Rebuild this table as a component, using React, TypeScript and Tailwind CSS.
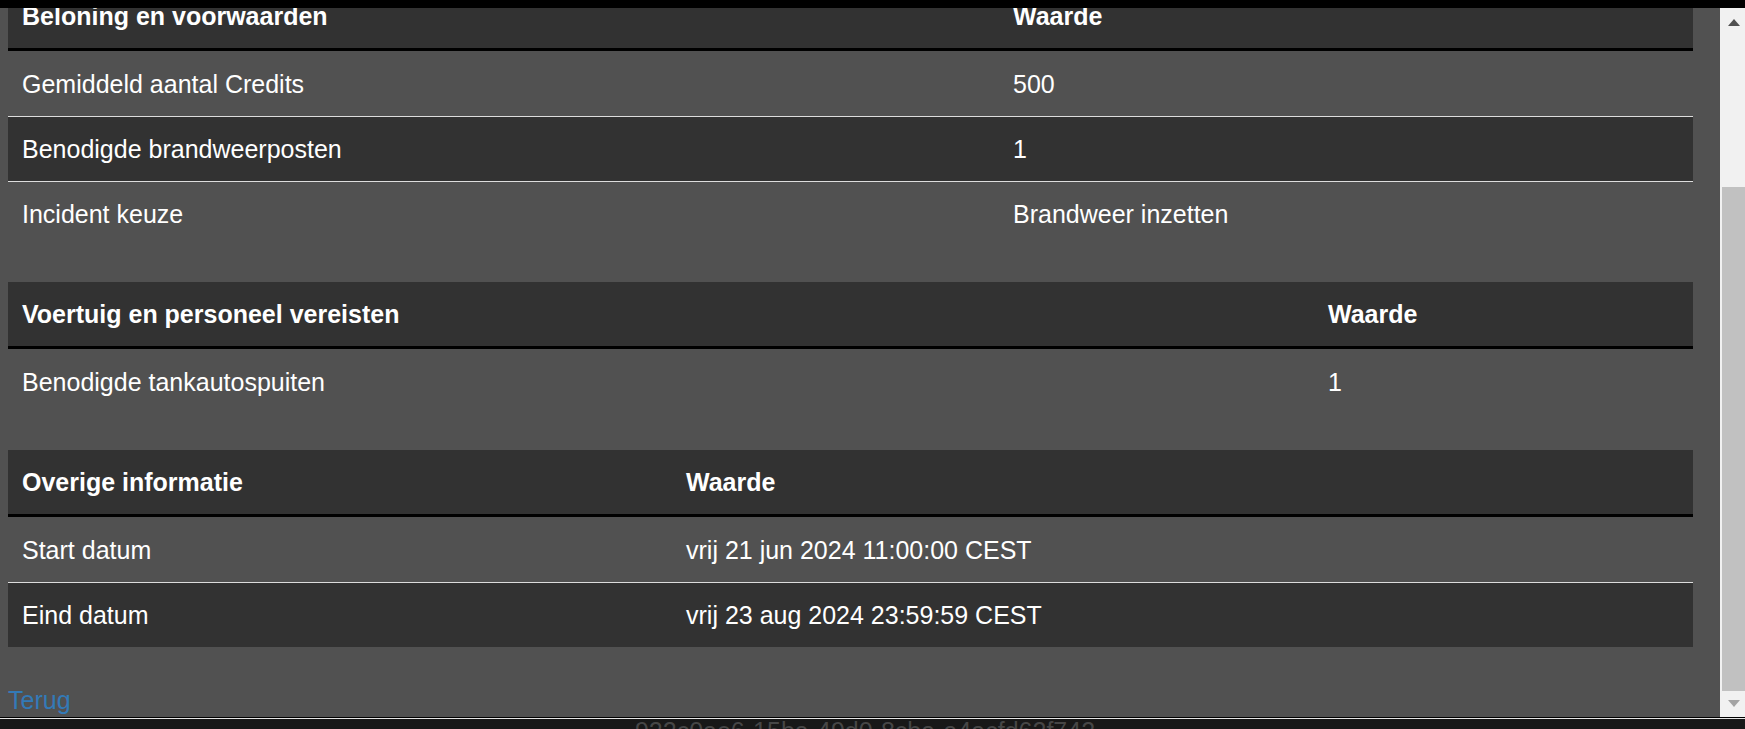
import React from 'react'

type Row = [string, string]

interface InfoTableProps {
  title: string
  cols: string
  rows: Row[]
}

// alternating body rows: light, dark, light...
function InfoTable({ title, cols, rows }: InfoTableProps) {
  return (
    <div className="w-[1685px] mb-[36px]">
      <div className={'grid h-[67px] bg-[#323232] border-b-[3px] border-black font-bold ' + cols}>
        <div className="flex items-center pl-[14px]">{title}</div>
        <div className="flex items-center pl-[14px]">Waarde</div>
      </div>
      {rows.map(([label, value], i) => (
        <div
          key={label}
          className={
            'grid h-[65px] ' +
            cols +
            (i % 2 === 0 ? ' bg-[#515151]' : ' bg-[#323232]') +
            (i > 0 ? ' border-t border-[#dddddd]' : '')
          }
        >
          <div className="flex items-center pl-[14px]">{label}</div>
          <div className="flex items-center pl-[14px]">{value}</div>
        </div>
      ))}
    </div>
  )
}

function FakeScrollbar() {
  return (
    <div className="w-[25px] flex flex-col bg-[#f1f1f1] pl-[2px]">
      <div className="h-[179px] flex justify-center pt-[11px]">
        <div className="w-0 h-0 border-l-[6.5px] border-r-[6.5px] border-b-[7px] border-l-transparent border-r-transparent border-b-[#505050]" />
      </div>
      <div className="flex-1 bg-[#c1c1c1]" />
      <div className="h-[26px] flex justify-center pt-[9px]">
        <div className="w-0 h-0 border-l-[6.5px] border-r-[6.5px] border-t-[7px] border-l-transparent border-r-transparent border-t-[#a3a3a3]" />
      </div>
    </div>
  )
}

export default function App() {
  return (
    <div className="h-screen flex flex-col bg-[#181818] text-white text-[25px] leading-[34px] font-['Liberation_Sans',Arial,sans-serif] overflow-hidden">
      <div className="h-[8px] bg-black shrink-0" />
      <div className="h-[709px] flex shrink-0">
        <div className="flex-1 bg-[#515151] overflow-hidden pl-[8px]">
          {/* scrolled down: the top of the page is out of view */}
          <div className="-mt-[24px]">
            <InfoTable
              title="Beloning en voorwaarden"
              cols="grid-cols-[991px_1fr]"
              rows={[
                ['Gemiddeld aantal Credits', '500'],
                ['Benodigde brandweerposten', '1'],
                ['Incident keuze', 'Brandweer inzetten'],
              ]}
            />
            <InfoTable
              title="Voertuig en personeel vereisten"
              cols="grid-cols-[1306px_1fr]"
              rows={[['Benodigde tankautospuiten', '1']]}
            />
            <InfoTable
              title="Overige informatie"
              cols="grid-cols-[664px_1fr]"
              rows={[
                ['Start datum', 'vrij 21 jun 2024 11:00:00 CEST'],
                ['Eind datum', 'vrij 23 aug 2024 23:59:59 CEST'],
              ]}
            />
            <a href="#" className="block text-[#337ab7]">
              Terug
            </a>
          </div>
        </div>
        <FakeScrollbar />
      </div>
      <div className="h-[1px] bg-black shrink-0" />
      <div className="h-[1px] bg-[#e5e5e5] shrink-0" />
      <div className="flex-1 pr-[15px] text-center leading-[25px] text-[#464646]">
        922c0ae6-15ba-49d0-8cba-a4acfd62f742
      </div>
    </div>
  )
}
